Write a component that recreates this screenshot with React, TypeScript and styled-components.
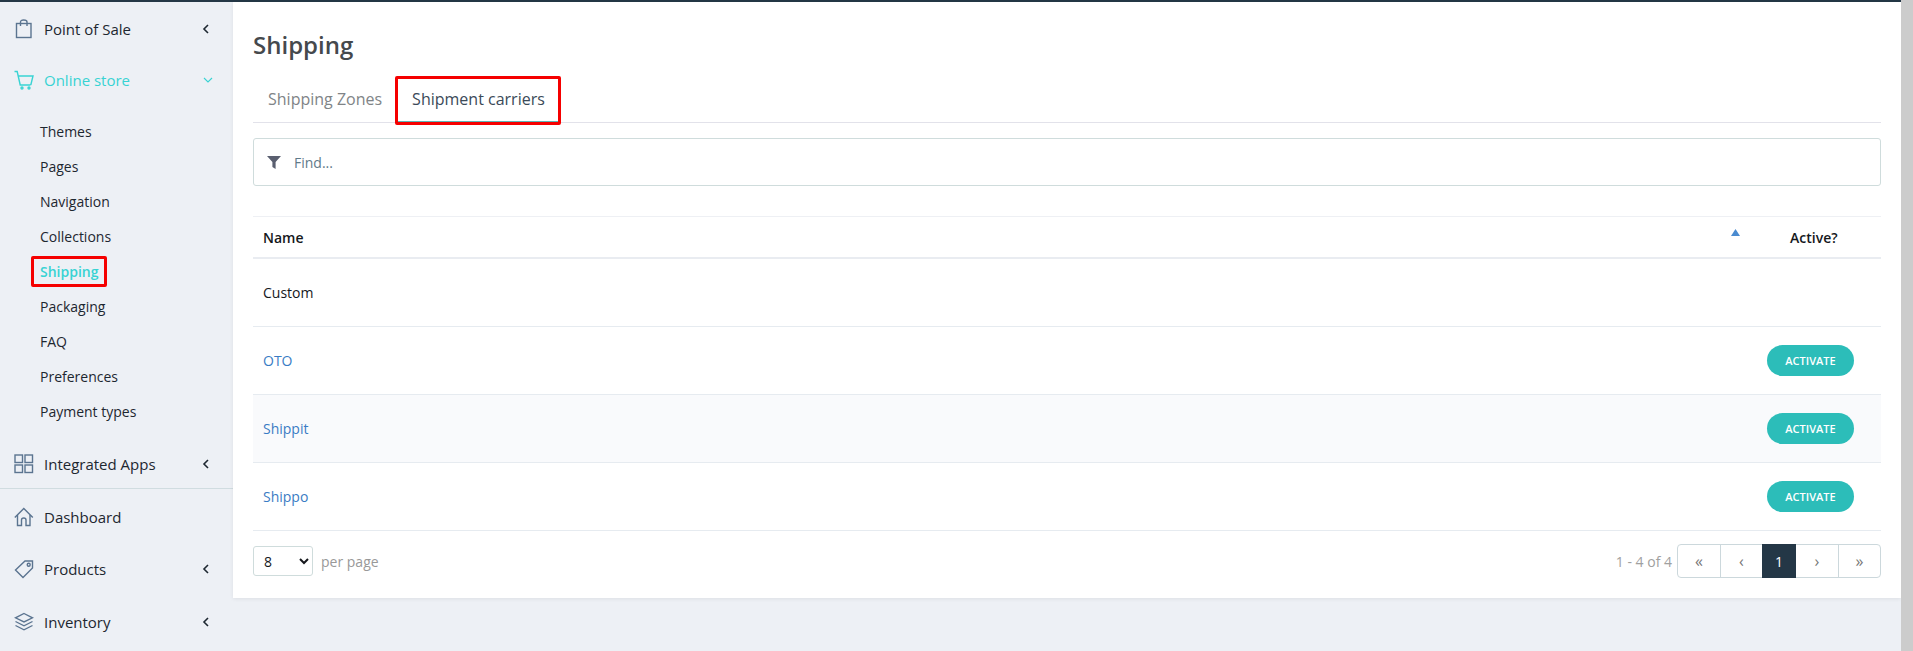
import * as React from 'react';
import styled, { createGlobalStyle } from 'styled-components';

const GlobalStyle = createGlobalStyle`
  html, body {
    margin: 0;
    padding: 0;
    height: 100%;
    overflow: hidden;
    background: #edf0f5;
    font-family: 'Open Sans', 'Liberation Sans', sans-serif;
    font-size: 14px;
  }
  * {
    box-sizing: border-box;
  }
`;

const Page = styled.div`
  display: flex;
  height: 651px;
`;

const Frame = styled.div`
  display: flex;
  flex-direction: column;
  flex: 1;
  min-width: 0;
`;

const ScrollTrack = styled.div`
  width: 12px;
  background: #cccccc;
`;

const TopBar = styled.div`
  height: 2px;
  background: #243746;
`;

const Body = styled.div`
  display: flex;
  flex: 1;
  min-height: 0;
`;

const Sidebar = styled.nav`
  width: 233px;
  padding-top: 1.5px;
  flex-shrink: 0;
`;

const NavRow = styled.div<{ $active?: boolean; $tall?: boolean }>`
  display: flex;
  align-items: center;
  height: ${(p) => (p.$tall ? '52.5px' : '51px')};
  padding: 0 22px 0 14px;
  gap: 10px;
  font-size: 15px;
  color: ${(p) => (p.$active ? '#38d3d3' : '#1d2730')};
`;

const NavIcon = styled.svg`
  width: 20px;
  height: 20px;
  flex-shrink: 0;
  fill: none;
  stroke: currentColor;
  stroke-width: 1.4;
`;

const NavIconSlate = styled(NavIcon)`
  color: #5b7490;
`;

const NavLabel = styled.span`
  flex: 1;
`;

const Chevron = styled.svg`
  width: 10px;
  height: 10px;
  fill: none;
  stroke: currentColor;
  stroke-width: 1.6;
`;

const ChevronOpen = styled(Chevron)`
  margin-right: -2px;
  stroke-width: 1.1;
`;

const SubMenu = styled.div`
  padding: 8px 0 10.5px 40px;
`;

const SubItem = styled.div<{ $active?: boolean }>`
  display: flex;
  align-items: center;
  height: 35px;
  color: ${(p) => (p.$active ? '#38d3d3' : '#1d2730')};
  font-weight: ${(p) => (p.$active ? 600 : 400)};
`;

const SubLabel = styled.span`
  position: relative;
`;

const RedMark = styled.span<{ $inset: string }>`
  position: absolute;
  inset: ${(p) => p.$inset};
  border: 3px solid #f50000;
  border-radius: 2px;
  pointer-events: none;
`;

const NavGroup = styled.div`
  border-top: 1px solid #d0dce0;
  padding-top: 1.5px;
`;

const IntegratedRow = styled(NavRow)`
  height: 49px;
`;

const Card = styled.main`
  flex: 1;
  align-self: flex-start;
  min-width: 0;
  background: #ffffff;
  padding: 27px 20px 20px;
  box-shadow: 0 1px 4px rgba(0, 0, 0, 0.07);
`;

const Title = styled.h1`
  margin: 0 0 15px;
  font-size: 24px;
  line-height: 32px;
  font-weight: 600;
  color: #45494d;
`;

const Tabs = styled.div`
  display: flex;
  height: 47px;
  border-bottom: 1px solid #e2e2ea;
`;

const Tab = styled.div<{ $active?: boolean }>`
  position: relative;
  display: flex;
  align-items: center;
  height: 46px;
  padding: 0 15px;
  font-size: 16px;
  color: ${(p) => (p.$active ? '#3b4a58' : '#808487')};
  border-bottom: ${(p) => (p.$active ? '1px solid #5fb5b5' : 'none')};
`;

const FilterBox = styled.div`
  display: flex;
  align-items: center;
  gap: 13px;
  height: 48px;
  margin-top: 15px;
  padding-left: 13px;
  border: 1px solid #cfdcdc;
  border-radius: 3px;
  color: #5f7a8a;
`;

const FilterIcon = styled.svg`
  width: 14px;
  height: 13px;
  fill: #5a5f70;
`;

const Table = styled.div`
  margin-top: 30px;
  border-top: 1px solid #eef0f4;
`;

const HeadRow = styled.div`
  display: flex;
  align-items: center;
  height: 42px;
  border-bottom: 2px solid #e9ecf1;
  font-weight: 600;
  color: #15181c;
`;

const Row = styled.div<{ $shaded?: boolean }>`
  display: flex;
  align-items: center;
  height: 68px;
  border-bottom: 1px solid #e6ebf0;
  background: ${(p) => (p.$shaded ? '#f9fafc' : '#ffffff')};
`;

const NameCell = styled.div`
  display: flex;
  justify-content: space-between;
  flex: 1;
  padding: 0 27px 0 10px;
  color: #15181c;
`;

const ActionCell = styled.div`
  width: 114px;
`;

const ActiveHead = styled(ActionCell)`
  padding-left: 23px;
`;

const SortMark = styled.svg`
  width: 9px;
  height: 7px;
  margin-top: 1px;
  fill: #4a8bd0;
`;

const CarrierLink = styled.a`
  color: #3a7cc4;
  text-decoration: none;
`;

const ActivateButton = styled.button`
  display: block;
  width: 87px;
  height: 31px;
  padding: 0;
  border: none;
  border-radius: 16px;
  background: #2cbdb9;
  color: #ffffff;
  font-family: inherit;
  font-size: 11px;
  font-weight: 600;
  text-transform: uppercase;
`;

const Footer = styled.div`
  display: flex;
  align-items: center;
  justify-content: space-between;
  padding-top: 13px;
`;

const PerPage = styled.div`
  display: flex;
  align-items: center;
  gap: 8px;
  color: #999999;
`;

const PageSelect = styled.select`
  width: 60px;
  height: 30px;
  padding-left: 6px;
  border: 1px solid #cfdcdc;
  border-radius: 3px;
  background: #ffffff;
  color: #15181c;
  font-family: inherit;
  font-size: 14px;
`;

const PagerWrap = styled.div`
  display: flex;
  align-items: center;
  gap: 5px;
  color: #a0a0a0;
`;

const Pager = styled.div`
  display: flex;
  height: 34px;
  border: 1px solid #ccd8dc;
  border-radius: 4px;
`;

const PageCell = styled.div<{ $current?: boolean; $divided?: boolean; $width: number }>`
  display: flex;
  align-items: center;
  justify-content: center;
  width: ${(p) => p.$width}px;
  margin: ${(p) => (p.$current ? '-1px 0' : '0')};
  background: ${(p) => (p.$current ? '#243746' : 'transparent')};
  color: ${(p) => (p.$current ? '#ffffff' : '#777777')};
  font-size: ${(p) => (p.$current ? '14px' : '16px')};
  border-left: ${(p) => (p.$divided ? '1px solid #ccd8dc' : 'none')};
`;

const ChevronLeft = () => (
  <Chevron viewBox="0 0 10 10">
    <path d="M7 1 L3 5 L7 9" />
  </Chevron>
);

const submenu = ['Themes', 'Pages', 'Navigation', 'Collections', 'Shipping', 'Packaging', 'FAQ', 'Preferences', 'Payment types'];
const carriers = ['OTO', 'Shippit', 'Shippo'];

export default function App() {
  return (
    <Page>
      <GlobalStyle />
      <Frame>
        <TopBar />
        <Body>
          <Sidebar>
            <NavRow>
              <NavIconSlate viewBox="0 0 20 20">
                <rect x="2.5" y="4.5" width="14.5" height="14" />
                <path d="M6.5 7 V3 Q6.5 1 9.7 1 Q13 1 13 3 V7" />
              </NavIconSlate>
              <NavLabel>Point of Sale</NavLabel>
              <ChevronLeft />
            </NavRow>
            <NavRow $active>
              <NavIcon viewBox="0 0 20 20">
                <path d="M0.5 1.5 H3.2 L6.2 15 H16.5 M4.2 6 H19 L16.8 15" />
                <circle cx="8" cy="18" r="1" />
                <circle cx="15" cy="18" r="1" />
              </NavIcon>
              <NavLabel>Online store</NavLabel>
              <ChevronOpen viewBox="0 0 10 10">
                <path d="M1 3 L5 7 L9 3" />
              </ChevronOpen>
            </NavRow>
            <SubMenu>
              {submenu.map((item) => (
                <SubItem key={item} $active={item === 'Shipping'}>
                  <SubLabel>
                    {item}
                    {item === 'Shipping' && <RedMark $inset="-6px -9px -6px -9px" />}
                  </SubLabel>
                </SubItem>
              ))}
            </SubMenu>
            <IntegratedRow>
              <NavIconSlate viewBox="0 0 20 20">
                <rect x="1" y="1" width="7.5" height="7.5" />
                <rect x="11" y="1" width="7.5" height="7.5" />
                <rect x="1" y="11" width="7.5" height="7.5" />
                <rect x="11" y="11" width="7.5" height="7.5" />
              </NavIconSlate>
              <NavLabel>Integrated Apps</NavLabel>
              <ChevronLeft />
            </IntegratedRow>
            <NavGroup>
              <NavRow $tall>
                <NavIconSlate viewBox="0 0 20 20">
                  <path d="M0.8 10.5 L9.8 1.5 L18.8 10.5" />
                  <path d="M3.5 8 V18.5 H7.5 V13 Q7.5 11 9.8 11 Q12 11 12 13 V18.5 H16 V8" />
                </NavIconSlate>
                <NavLabel>Dashboard</NavLabel>
              </NavRow>
              <NavRow $tall>
                <NavIconSlate viewBox="0 0 20 20">
                  <path d="M11 2 H18.5 V9 L9 18.5 L1.5 11 Z" />
                  <circle cx="14.7" cy="5.8" r="1.5" />
                </NavIconSlate>
                <NavLabel>Products</NavLabel>
                <ChevronLeft />
              </NavRow>
              <NavRow $tall>
                <NavIconSlate viewBox="0 0 20 20">
                  <path d="M10 1.5 L18.5 5.8 L10 10 L1.5 5.8 Z" />
                  <path d="M1.5 9.5 L10 13.8 L18.5 9.5" />
                  <path d="M1.5 13.5 L10 17.8 L18.5 13.5" />
                </NavIconSlate>
                <NavLabel>Inventory</NavLabel>
                <ChevronLeft />
              </NavRow>
            </NavGroup>
          </Sidebar>
          <Card>
            <Title>Shipping</Title>
            <Tabs>
              <Tab>Shipping Zones</Tab>
              <Tab $active>
                Shipment carriers
                <RedMark $inset="0 -1px -4px -2px" />
              </Tab>
            </Tabs>
            <FilterBox>
              <FilterIcon viewBox="0 0 14 13">
                <path d="M0 0 H14 L8.6 6 V13 L5.4 11 V6 Z" />
              </FilterIcon>
              Find...
            </FilterBox>
            <Table>
              <HeadRow>
                <NameCell>
                  Name
                  <SortMark viewBox="0 0 9 7">
                    <path d="M4.5 0 L9 7 H0 Z" />
                  </SortMark>
                </NameCell>
                <ActiveHead>Active?</ActiveHead>
              </HeadRow>
              <Row>
                <NameCell>Custom</NameCell>
                <ActionCell />
              </Row>
              {carriers.map((name) => (
                <Row key={name} $shaded={name === 'Shippit'}>
                  <NameCell>
                    <CarrierLink href="#">{name}</CarrierLink>
                  </NameCell>
                  <ActionCell>
                    <ActivateButton>Activate</ActivateButton>
                  </ActionCell>
                </Row>
              ))}
            </Table>
            <Footer>
              <PerPage>
                <PageSelect defaultValue="8">
                  <option value="8">8</option>
                  <option value="16">16</option>
                </PageSelect>
                per page
              </PerPage>
              <PagerWrap>
                1 - 4 of 4
                <Pager>
                  <PageCell $width={42}>«</PageCell>
                  <PageCell $width={42} $divided>
                    ‹
                  </PageCell>
                  <PageCell $width={34} $current>
                    1
                  </PageCell>
                  <PageCell $width={42}>›</PageCell>
                  <PageCell $width={42} $divided>
                    »
                  </PageCell>
                </Pager>
              </PagerWrap>
            </Footer>
          </Card>
        </Body>
      </Frame>
      <ScrollTrack />
    </Page>
  );
}
